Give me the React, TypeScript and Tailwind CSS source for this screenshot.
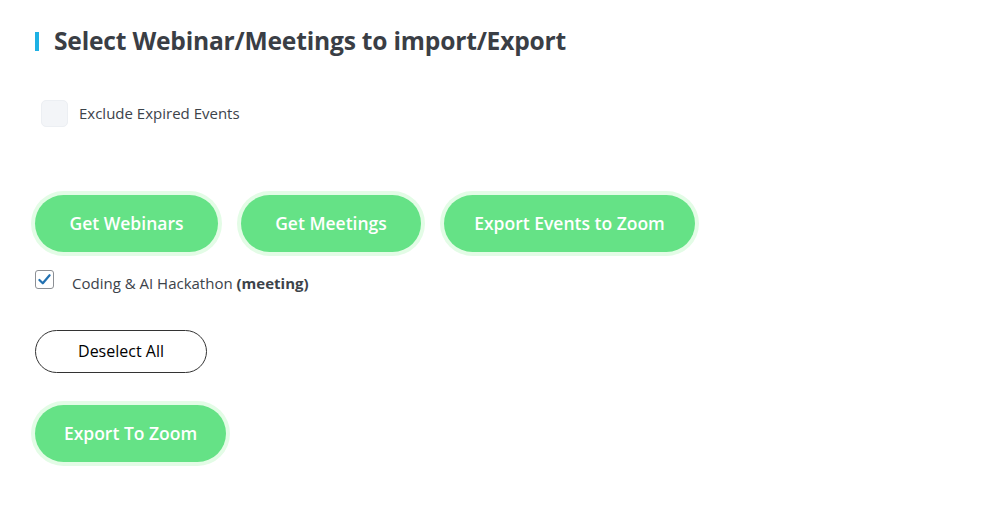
import React from "react";

const font = { fontFamily: '"Open Sans", "Noto Sans", sans-serif' };

function GreenButton({ label, width }: { label: string; width: string }) {
   return (
      <button
         className={`h-[57px] ${width} rounded-full bg-[#65e286] text-white text-[17.5px] font-semibold ring-4 ring-[#e3fce6] cursor-pointer`}
      >
         {label}
      </button>
   );
}

export default function App() {
   return (
      <div
         className="w-[993px] h-[515px] bg-white text-[#3c434a] pl-[35px] pt-[23px]"
         style={font}
      >
         <div className="flex items-center gap-[15px]">
            <span className="w-[4px] h-[19px] bg-[#1eb1e4]" />
            <h1 className="text-[24.6px] font-bold text-[#3a3e45] tracking-[-0.2px]">
               Select Webinar/Meetings to import/Export
            </h1>
         </div>

         <div className="flex items-center gap-[11px] mt-[40px] ml-[6px]">
            <span className="w-[27px] h-[27px] rounded-[5px] bg-[#f3f5f8] border border-[#eceff3]" />
            <span className="text-[15px]">Exclude Expired Events</span>
         </div>

         <div className="flex gap-[23px] mt-[68px]">
            <GreenButton label="Get Webinars" width="w-[183px]" />
            <GreenButton label="Get Meetings" width="w-[180px]" />
            <GreenButton label="Export Events to Zoom" width="w-[251px]" />
         </div>

         <div className="flex items-start gap-[18px] mt-[18px]">
            <span className="w-[19px] h-[19px] rounded-[3px] border border-[#8c8f94] bg-white flex items-center justify-center">
               <svg viewBox="0 0 20 20" className="w-[17px] h-[17px]">
                  <path
                     d="M4 10.5 L8 14.5 L16 5"
                     fill="none"
                     stroke="#2271b1"
                     strokeWidth="2.6"
                     strokeLinecap="round"
                     strokeLinejoin="round"
                  />
               </svg>
            </span>
            <span className="text-[15px] leading-[22px] mt-[2px]">
               Coding &amp; AI Hackathon <b className="font-bold">(meeting)</b>
            </span>
         </div>

         <button className="mt-[36px] w-[172px] h-[43px] rounded-full border border-[#333] bg-white text-black text-[16px] block">
            Deselect All
         </button>

         <div className="mt-[32px]">
            <GreenButton label="Export To Zoom" width="w-[191px]" />
         </div>
      </div>
   );
}
